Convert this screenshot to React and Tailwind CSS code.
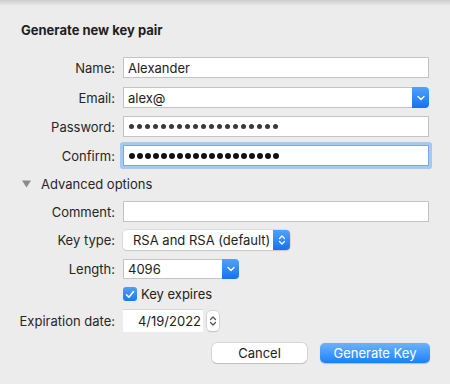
import React from "react";

const Label = ({ children }) => (
  <div className="w-[115px] shrink-0 text-right pr-0 text-[#262626]">{children}</div>
);

const Dots = ({ n, big }) => (
  <div className={big ? "flex items-center gap-[2px]" : "flex items-center gap-[2.6px]"}>
    {Array.from({ length: n }).map((_, i) => (
      <div
        key={i}
        className={big ? "w-[6px] h-[6px] rounded-full bg-[#111]" : "w-[5.4px] h-[5.4px] rounded-full bg-[#3a3a3a]"}
      />
    ))}
  </div>
);

const Chevron = () => (
  <svg width="8" height="6" viewBox="0 0 8 6" fill="none">
    <path d="M1 1.5 L4 4.5 L7 1.5" stroke="white" strokeWidth="1.4" strokeLinecap="round" strokeLinejoin="round" />
  </svg>
);

const DoubleChevron = ({ color = "white" }) => (
  <svg width="8" height="12" viewBox="0 0 8 12" fill="none">
    <path d="M1.5 4.5 L4 2 L6.5 4.5" stroke={color} strokeWidth="1.3" strokeLinecap="round" strokeLinejoin="round" />
    <path d="M1.5 7.5 L4 10 L6.5 7.5" stroke={color} strokeWidth="1.3" strokeLinecap="round" strokeLinejoin="round" />
  </svg>
);

export default function App() {
  return (
    <div className="w-[450px] h-[384px] bg-[#ececec] flex flex-col font-['Inter',sans-serif] text-[13px] leading-[16px] text-[#262626] overflow-hidden">
      <div className="h-[6px] shrink-0 bg-gradient-to-b from-[#cdcdcd] to-[#ececec]" />
      <div className="pl-[21px] mt-[16px] font-bold text-[#1e1e1e]">Generate new key pair</div>

      {/* Name */}
      <div className="mt-[19px] flex items-center h-[21px] pr-[21px]">
        <Label>Name:</Label>
        <div className="ml-[8px] flex-1 h-full bg-white border border-[#c4c4c4] flex items-center pl-[4px] text-[#222]">
          Alexander
        </div>
      </div>

      {/* Email */}
      <div className="mt-[9px] flex items-center h-[21px] pr-[21px]">
        <Label>Email:</Label>
        <div className="ml-[8px] flex-1 h-full flex">
          <div className="flex-1 bg-white border border-[#c4c4c4] border-r-0 flex items-center pl-[4px] text-[#222]">
            alex@
          </div>
          <div className="w-[17px] h-full rounded-r-[4px] bg-gradient-to-b from-[#4fa2fb] to-[#1272f0] flex items-center justify-center">
            <Chevron />
          </div>
        </div>
      </div>

      {/* Password */}
      <div className="mt-[8px] flex items-center h-[21px] pr-[21px]">
        <Label>Password:</Label>
        <div className="ml-[8px] flex-1 h-full bg-white border border-[#c4c4c4] flex items-center pl-[5px]">
          <Dots n={19} />
        </div>
      </div>

      {/* Confirm */}
      <div className="mt-[8px] flex items-center h-[21px] pr-[21px]">
        <Label>Confirm:</Label>
        <div className="ml-[8px] flex-1 h-full bg-white border border-[#7aa7e0] rounded-[1px] shadow-[0_0_0_3px_#a7c8f0] flex items-center pl-[5px]">
          <Dots n={19} big />
        </div>
      </div>

      {/* Advanced */}
      <div className="mt-[10px] flex items-center h-[16px] pl-[22px]">
        <svg width="9" height="8" viewBox="0 0 9 8">
          <path d="M0 0.5 L9 0.5 L4.5 7.5 Z" fill="#8b8b8b" />
        </svg>
        <span className="ml-[10px]">Advanced options</span>
      </div>

      {/* Comment */}
      <div className="mt-[9px] flex items-center h-[21px] pr-[21px]">
        <Label>Comment:</Label>
        <div className="ml-[8px] flex-1 h-full bg-white border border-[#c4c4c4]" />
      </div>

      {/* Key type */}
      <div className="mt-[8px] flex items-center h-[20px]">
        <Label>Key type:</Label>
        <div className="ml-[8px] w-[167px] h-full flex rounded-[4px] shadow-[0_0_0_0.5px_#c8c8c8,0_1px_1px_rgba(0,0,0,0.15)] bg-white">
          <div className="flex-1 flex items-center pl-[10px] text-[#222]">RSA and RSA (default)</div>
          <div className="w-[17px] h-full rounded-r-[4px] bg-gradient-to-b from-[#4fa2fb] to-[#1272f0] flex items-center justify-center">
            <DoubleChevron />
          </div>
        </div>
      </div>

      {/* Length */}
      <div className="mt-[9px] flex items-center h-[20px]">
        <Label>Length:</Label>
        <div className="ml-[8px] w-[116px] h-full flex">
          <div className="flex-1 bg-white border border-[#c4c4c4] border-r-0 flex items-center pl-[4px] text-[#222]">
            4096
          </div>
          <div className="w-[17px] h-full rounded-r-[4px] bg-gradient-to-b from-[#4fa2fb] to-[#1272f0] flex items-center justify-center">
            <Chevron />
          </div>
        </div>
      </div>

      {/* Key expires */}
      <div className="mt-[8px] flex items-center h-[14px] pl-[123px]">
        <div className="w-[14px] h-[14px] rounded-[3px] bg-gradient-to-b from-[#4ea0fb] to-[#1a78f2] flex items-center justify-center">
          <svg width="10" height="9" viewBox="0 0 10 9" fill="none">
            <path d="M1.5 4.8 L3.9 7.2 L8.5 1.5" stroke="white" strokeWidth="1.6" strokeLinecap="round" strokeLinejoin="round" />
          </svg>
        </div>
        <span className="ml-[4px] text-[#222]">Key expires</span>
      </div>

      {/* Expiration date */}
      <div className="mt-[8px] flex items-center h-[23px]">
        <Label>Expiration date:</Label>
        <div className="ml-[8px] w-[80px] h-full bg-white border-t border-[#d6d6d6] flex items-center justify-end pr-[2px] text-[#222]">
          4/19/2022
        </div>
        <div className="ml-[4px] w-[12px] h-[20px] bg-white rounded-[4px] shadow-[0_0_0_0.5px_#bdbdbd,0_1px_1px_rgba(0,0,0,0.15)] flex items-center justify-center">
          <DoubleChevron color="#555" />
        </div>
      </div>

      {/* Buttons */}
      <div className="mt-[11px] flex justify-end h-[20px] pr-[20px] gap-[13px]">
        <div className="w-[95px] h-full bg-white rounded-[5px] shadow-[0_0_0_0.5px_#bdbdbd,0_1px_1px_rgba(0,0,0,0.18)] flex items-center justify-center text-[#222]">
          Cancel
        </div>
        <div className="w-[110px] h-full rounded-[5px] bg-gradient-to-b from-[#6ab2fb] to-[#1480fc] shadow-[0_0.5px_1px_rgba(0,0,0,0.2)] flex items-center justify-center text-white">
          Generate Key
        </div>
      </div>
    </div>
  );
}
